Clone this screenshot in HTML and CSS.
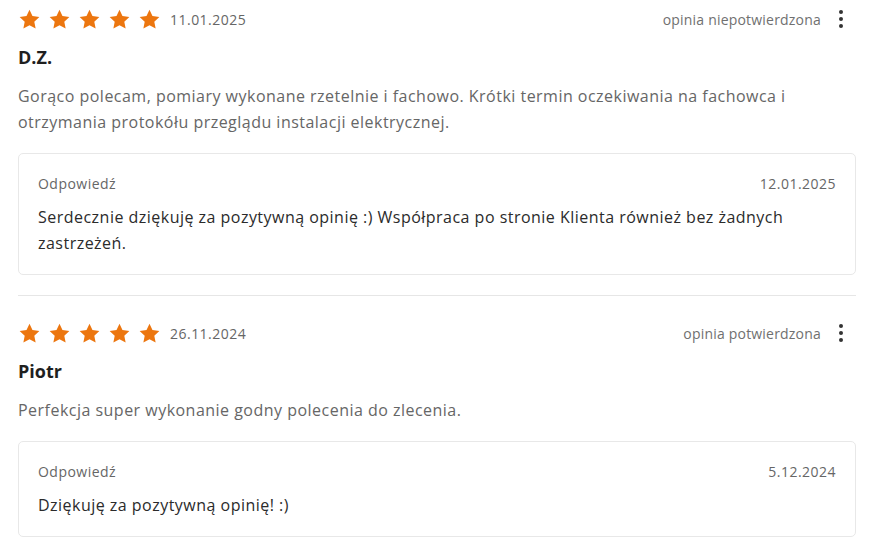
FILE: index.html
```html
<!DOCTYPE html>
<html lang="pl">
<head>
    <meta charset="UTF-8">
    <meta name="viewport" content="width=device-width, initial-scale=1.0">
    <title>Opinie</title>
    <link rel="stylesheet" href="styles.css">
</head>
<body>
    <div class="reviews">
        <div class="review">
            <div class="review-head">
                <div class="stars">
                    <svg viewBox="0 0 24 24"><path d="M12 1.8l3.1 6.6 7.2.9-5.3 5 1.4 7.1L12 17.9l-6.4 3.5 1.4-7.1-5.3-5 7.2-.9z"/></svg>
                    <svg viewBox="0 0 24 24"><path d="M12 1.8l3.1 6.6 7.2.9-5.3 5 1.4 7.1L12 17.9l-6.4 3.5 1.4-7.1-5.3-5 7.2-.9z"/></svg>
                    <svg viewBox="0 0 24 24"><path d="M12 1.8l3.1 6.6 7.2.9-5.3 5 1.4 7.1L12 17.9l-6.4 3.5 1.4-7.1-5.3-5 7.2-.9z"/></svg>
                    <svg viewBox="0 0 24 24"><path d="M12 1.8l3.1 6.6 7.2.9-5.3 5 1.4 7.1L12 17.9l-6.4 3.5 1.4-7.1-5.3-5 7.2-.9z"/></svg>
                    <svg viewBox="0 0 24 24"><path d="M12 1.8l3.1 6.6 7.2.9-5.3 5 1.4 7.1L12 17.9l-6.4 3.5 1.4-7.1-5.3-5 7.2-.9z"/></svg>
                </div>
                <span class="date">11.01.2025</span>
                <span class="status">opinia niepotwierdzona</span>
                <button class="more" aria-label="Więcej"><span></span><span></span><span></span></button>
            </div>
            <h3 class="author">D.Z.</h3>
            <p class="text">Gorąco polecam, pomiary wykonane rzetelnie i fachowo. Krótki termin oczekiwania na fachowca i otrzymania protokółu przeglądu instalacji elektrycznej.</p>
            <div class="reply">
                <div class="reply-head">
                    <span>Odpowiedź</span>
                    <span>12.01.2025</span>
                </div>
                <p class="reply-text">Serdecznie dziękuję za pozytywną opinię :) Współpraca po stronie Klienta również bez żadnych zastrzeżeń.</p>
            </div>
        </div>

        <div class="review">
            <div class="review-head">
                <div class="stars">
                    <svg viewBox="0 0 24 24"><path d="M12 1.8l3.1 6.6 7.2.9-5.3 5 1.4 7.1L12 17.9l-6.4 3.5 1.4-7.1-5.3-5 7.2-.9z"/></svg>
                    <svg viewBox="0 0 24 24"><path d="M12 1.8l3.1 6.6 7.2.9-5.3 5 1.4 7.1L12 17.9l-6.4 3.5 1.4-7.1-5.3-5 7.2-.9z"/></svg>
                    <svg viewBox="0 0 24 24"><path d="M12 1.8l3.1 6.6 7.2.9-5.3 5 1.4 7.1L12 17.9l-6.4 3.5 1.4-7.1-5.3-5 7.2-.9z"/></svg>
                    <svg viewBox="0 0 24 24"><path d="M12 1.8l3.1 6.6 7.2.9-5.3 5 1.4 7.1L12 17.9l-6.4 3.5 1.4-7.1-5.3-5 7.2-.9z"/></svg>
                    <svg viewBox="0 0 24 24"><path d="M12 1.8l3.1 6.6 7.2.9-5.3 5 1.4 7.1L12 17.9l-6.4 3.5 1.4-7.1-5.3-5 7.2-.9z"/></svg>
                </div>
                <span class="date">26.11.2024</span>
                <span class="status">opinia potwierdzona</span>
                <button class="more" aria-label="Więcej"><span></span><span></span><span></span></button>
            </div>
            <h3 class="author">Piotr</h3>
            <p class="text">Perfekcja super wykonanie godny polecenia do zlecenia.</p>
            <div class="reply">
                <div class="reply-head">
                    <span>Odpowiedź</span>
                    <span>5.12.2024</span>
                </div>
                <p class="reply-text">Dziękuję za pozytywną opinię! :)</p>
            </div>
        </div>
    </div>
</body>
</html>
```

FILE: styles.css
```css
* {
    margin: 0;
    padding: 0;
    box-sizing: border-box;
}
body {
    font-family: "Open Sans", Lato, sans-serif;
    background-color: white;
    color: #222;
    letter-spacing: 0.03em;
}
.reviews {
    padding: 0 20px 0 18px;
}
.review {
    padding: 23px 0 20px;
    border-bottom: 1px solid #e6e6e6;
}
.review:first-child {
    padding-top: 5px;
}
.review-head {
    display: flex;
    align-items: center;
    height: 28px;
}
.stars {
    display: flex;
    gap: 7px;
}
.stars svg {
    width: 23px;
    height: 23px;
    fill: #ec760f;
}
.date {
    margin-left: 9px;
    font-size: 14px;
    color: #666;
}
.status {
    margin-left: auto;
    font-size: 14px;
    color: #707070;
    letter-spacing: 0.2px;
}
.more {
    display: flex;
    flex-direction: column;
    align-items: center;
    gap: 3px;
    width: 20px;
    margin-left: 10px;
    margin-right: 5px;
    background: none;
    border: none;
    cursor: pointer;
}
.more span {
    width: 4px;
    height: 4px;
    border-radius: 50%;
    background-color: #333;
}
.author {
    margin-top: 12px;
    font-size: 18px;
    line-height: 24px;
    font-weight: 700;
    color: #1f1f1f;
    letter-spacing: 0;
}
.text {
    margin-top: 14px;
    font-size: 16px;
    line-height: 26px;
    color: #666;
}
.reply {
    margin-top: 18px;
    border: 1px solid #e8e8e8;
    border-radius: 5px;
    padding: 20px 19px 18px;
}
.reply-head {
    display: flex;
    justify-content: space-between;
    font-size: 14px;
    line-height: 20px;
    color: #666;
}
.reply-text {
    margin-top: 10px;
    font-size: 16px;
    line-height: 26px;
    color: #2b2b2b;
}
```
